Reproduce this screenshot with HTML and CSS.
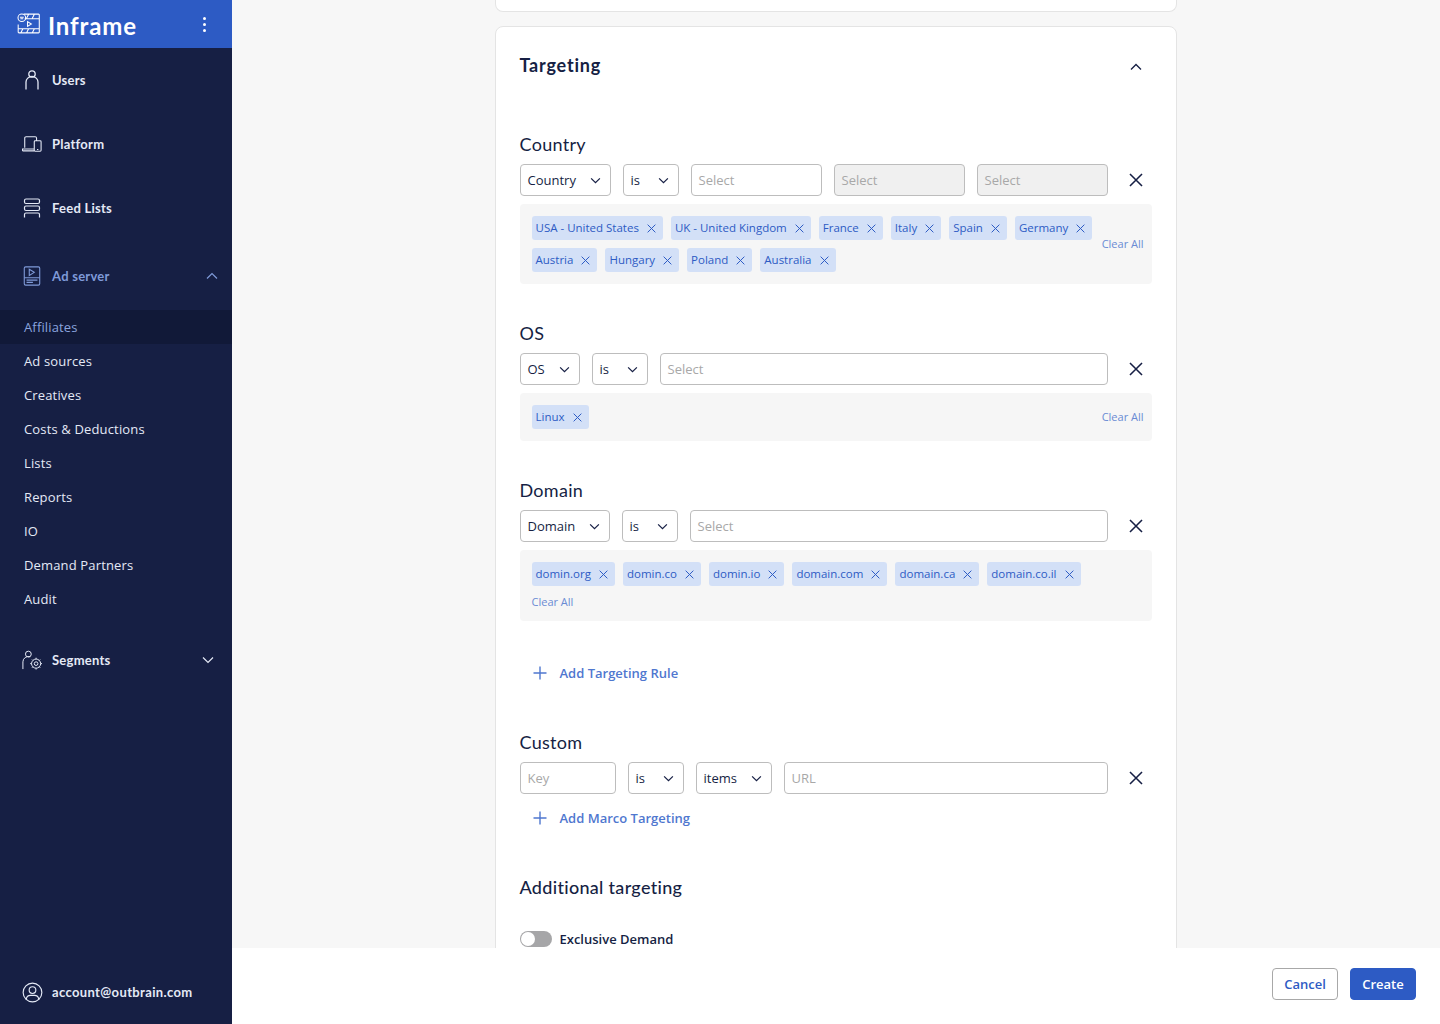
FILE: index.html
```html
<!DOCTYPE html>
<html lang="en">
<head>
<meta charset="utf-8">
<title>Inframe</title>
<link rel="stylesheet" href="styles.css">
</head>
<body>
<svg class="defs" width="0" height="0" aria-hidden="true">
  <symbol id="chev" viewBox="0 0 12 8"><path d="M1 1.500l5 5 5-5" fill="none" stroke="currentColor" stroke-width="1.400"/></symbol>
  <symbol id="x" viewBox="0 0 10 10"><path d="M.7.7l8.600 8.600M9.300.7l-8.600 8.600" fill="none" stroke="currentColor" stroke-width="1.100"/></symbol>
  <symbol id="plus" viewBox="0 0 14 14"><path d="M7 .5v13M.5 7h13" fill="none" stroke="currentColor" stroke-width="1.400"/></symbol>
</svg>
<div class="app">
  <aside class="sidebar">
    <header class="brand">
      <svg class="brand-logo" viewBox="0 0 24 22" fill="none" stroke="#fff" stroke-width="1.100"><path d="M7 1.200h15.500a.8.8 0 0 1 .8.8v18a.8.8 0 0 1-.8.8H2a.8.8 0 0 1-.8-.8v-8M1.200 16.500h22M8 6h15.300M12 1.500l-2 4M18 1.500l-2 4M6 16.800l-2 4M12 16.800l-2 4M18 16.800l-2 4"/><circle cx="5" cy="5" r="4"/><path d="M3 4.500h4M3.500 6h3"/><path d="M11 9v5l4-2.500z"/></svg>
      <span class="brand-name">Inframe</span>
      <span class="kebab"><i></i><i></i><i></i></span>
    </header>
    <nav class="nav">
      <a class="nav-item"><svg class="nav-icon" viewBox="0 0 20 20" fill="none" stroke="currentColor" stroke-width="1.300"><circle cx="10" cy="4" r="3.200"/><path d="M4 19.500v-7.500a6 5.500 0 0 1 12 0v7.500"/></svg><span>Users</span></a>
      <a class="nav-item"><svg class="nav-icon" viewBox="0 0 22 18" fill="none" stroke="currentColor" stroke-width="1.200"><path d="M3 13V2.500A1.500 1.500 0 0 1 4.500 1H14.500a1.500 1.500 0 0 1 1.500 1.500V5M.5 14.500H13.500v1.300a.8.8 0 0 1-.8.8H1.300a.8.8 0 0 1-.8-.8zM14.500 5.500h5.500a1 1 0 0 1 1 1v9.500a1 1 0 0 1-1 1h-5.500a1 1 0 0 1-1-1V6.500a1 1 0 0 1 1-1zM16.500 15h1.500"/></svg><span>Platform</span></a>
      <a class="nav-item"><svg class="nav-icon" viewBox="0 0 20 20" fill="none" stroke="currentColor" stroke-width="1.200"><rect x="2.500" y="1" width="15" height="4.500" rx="1.500"/><rect x="2.500" y="8" width="15" height="4.500" rx="1.500"/><path d="M2.500 19.500v-3a1.500 1.500 0 0 1 1.500-1.500h12a1.500 1.500 0 0 1 1.500 1.500v3"/></svg><span>Feed Lists</span></a>
      <a class="nav-item nav-item-open"><svg class="nav-icon" viewBox="0 0 20 22" fill="none" stroke="currentColor" stroke-width="1.200"><rect x="1.500" y="1" width="17" height="20" rx="1.500"/><path d="M1.500 13h17M7 3.500v7l5.500-3.500zM4 15.500h12M4 18h7"/></svg><span>Ad server</span><svg class="nav-chev nav-chev-up" viewBox="0 0 12 8"><path d="M1 6.500l5-5 5 5" fill="none" stroke="currentColor" stroke-width="1.200"/></svg></a>
      <ul class="subnav">
        <li class="subnav-item subnav-active">Affiliates</li>
        <li class="subnav-item">Ad sources</li>
        <li class="subnav-item">Creatives</li>
        <li class="subnav-item">Costs &amp; Deductions</li>
        <li class="subnav-item">Lists</li>
        <li class="subnav-item">Reports</li>
        <li class="subnav-item">IO</li>
        <li class="subnav-item">Demand Partners</li>
        <li class="subnav-item">Audit</li>
      </ul>
      <a class="nav-item nav-item-segments"><svg class="nav-icon" viewBox="0 0 22 22" fill="none" stroke="currentColor" stroke-width="1.100"><circle cx="7" cy="4.500" r="3.200"/><path d="M1 21v-8a6 6 0 0 1 8-5.500"/><circle cx="15.500" cy="15" r="5"/><circle cx="15.500" cy="15" r="2"/><path d="M15.500 8.500v1.500M15.500 20v1.500M9 15h1.500M20.500 15H22M11 10.500l1 1M19 18.500l1 1M11 19.500l1-1M19 11.500l1-1"/></svg><span>Segments</span><svg class="nav-chev" viewBox="0 0 12 8"><path d="M1 1.500l5 5 5-5" fill="none" stroke="currentColor" stroke-width="1.200"/></svg></a>
    </nav>
    <a class="nav-item account"><svg class="nav-icon account-icon" viewBox="0 0 22 22" fill="none" stroke="currentColor" stroke-width="1.200"><circle cx="11" cy="11" r="9.800"/><circle cx="11" cy="8.500" r="3.500"/><path d="M4.500 18.500v-.5a4.500 4.500 0 0 1 4.500-4h4a4.500 4.500 0 0 1 4.500 4v.5"/></svg><span>account@outbrain.com</span></a>
  </aside>

  <div class="main">
    <main class="content">
      <div class="card card-prev"></div>
      <section class="card card-targeting">
        <div class="card-head">
          <h2 class="card-title">Targeting</h2>
          <svg class="card-chev" viewBox="0 0 12 8"><path d="M1 6.500l5-5 5 5" fill="none" stroke="currentColor" stroke-width="1.300"/></svg>
        </div>

        <div class="rule rule-first">
          <h3 class="rule-title">Country</h3>
          <div class="rule-row">
            <div class="field select w-country">Country<svg class="chev"><use href="#chev"/></svg></div>
            <div class="field select w-is">is<svg class="chev"><use href="#chev"/></svg></div>
            <div class="field grow placeholder">Select</div>
            <div class="field grow placeholder disabled">Select</div>
            <div class="field grow placeholder disabled">Select</div>
            <button class="close"><svg><use href="#x"/></svg></button>
          </div>
          <div class="tagbox">
            <div class="tags">
              <span class="tag">USA - United States<svg><use href="#x"/></svg></span>
              <span class="tag">UK - United Kingdom<svg><use href="#x"/></svg></span>
              <span class="tag">France<svg><use href="#x"/></svg></span>
              <span class="tag">Italy<svg><use href="#x"/></svg></span>
              <span class="tag">Spain<svg><use href="#x"/></svg></span>
              <span class="tag">Germany<svg><use href="#x"/></svg></span>
              <span class="tag">Austria<svg><use href="#x"/></svg></span>
              <span class="tag">Hungary<svg><use href="#x"/></svg></span>
              <span class="tag">Poland<svg><use href="#x"/></svg></span>
              <span class="tag">Australia<svg><use href="#x"/></svg></span>
            </div>
            <a class="clear">Clear All</a>
          </div>
        </div>

        <div class="rule">
          <h3 class="rule-title">OS</h3>
          <div class="rule-row">
            <div class="field select w-os">OS<svg class="chev"><use href="#chev"/></svg></div>
            <div class="field select w-is">is<svg class="chev"><use href="#chev"/></svg></div>
            <div class="field grow placeholder">Select</div>
            <button class="close"><svg><use href="#x"/></svg></button>
          </div>
          <div class="tagbox">
            <div class="tags">
              <span class="tag">Linux<svg><use href="#x"/></svg></span>
            </div>
            <a class="clear">Clear All</a>
          </div>
        </div>

        <div class="rule">
          <h3 class="rule-title">Domain</h3>
          <div class="rule-row">
            <div class="field select w-domain">Domain<svg class="chev"><use href="#chev"/></svg></div>
            <div class="field select w-is-d">is<svg class="chev"><use href="#chev"/></svg></div>
            <div class="field grow placeholder">Select</div>
            <button class="close"><svg><use href="#x"/></svg></button>
          </div>
          <div class="tagbox tagbox-stacked">
            <div class="tags">
              <span class="tag">domin.org<svg><use href="#x"/></svg></span>
              <span class="tag">domin.co<svg><use href="#x"/></svg></span>
              <span class="tag">domin.io<svg><use href="#x"/></svg></span>
              <span class="tag">domain.com<svg><use href="#x"/></svg></span>
              <span class="tag">domain.ca<svg><use href="#x"/></svg></span>
              <span class="tag">domain.co.il<svg><use href="#x"/></svg></span>
            </div>
            <a class="clear">Clear All</a>
          </div>
        </div>

        <a class="add add-rule"><svg><use href="#plus"/></svg>Add Targeting Rule</a>

        <div class="rule rule-custom">
          <h3 class="rule-title">Custom</h3>
          <div class="rule-row">
            <div class="field placeholder w-key">Key</div>
            <div class="field select w-is-c">is<svg class="chev"><use href="#chev"/></svg></div>
            <div class="field select w-items">items<svg class="chev"><use href="#chev"/></svg></div>
            <div class="field grow placeholder">URL</div>
            <button class="close"><svg><use href="#x"/></svg></button>
          </div>
        </div>
        <a class="add add-macro"><svg><use href="#plus"/></svg>Add Marco Targeting</a>

        <h3 class="rule-title additional">Additional targeting</h3>
        <div class="toggle-row">
          <span class="toggle"></span>
          <span class="toggle-label">Exclusive Demand</span>
        </div>
      </section>
    </main>
    <footer class="footer">
      <button class="btn btn-secondary">Cancel</button>
      <button class="btn btn-primary">Create</button>
    </footer>
  </div>
</div>
</body>
</html>
```

FILE: styles.css
```css
* { box-sizing: border-box; }
html, body { margin: 0; height: 100%; }
body { font-family: "Open Sans", "Noto Sans", sans-serif; color: #161f44; background: #f7f7f7; overflow: hidden; }
.defs { position: absolute; }
.app { display: flex; height: 1024px; }

.sidebar { width: 232px; flex: none; background: #161f44; color: #e4e9f6; display: flex; flex-direction: column; }
.brand { height: 48px; flex: none; background: #2d5bc4; display: flex; align-items: center; padding: 0 26px 0 17px; }
.brand-logo { width: 23px; height: 21px; margin-top: -1px; }
.brand-name { font: 700 24px/48px Lato, sans-serif; color: #fff; margin-left: 8px; padding-top: 3px; letter-spacing: .9px; flex: 1; }
.kebab { display: flex; flex-direction: column; gap: 3px; }
.kebab i { width: 3px; height: 3px; border-radius: 50%; background: #fff; display: block; }

.nav { display: flex; flex-direction: column; }
.nav-item { height: 64px; display: flex; align-items: center; padding: 0 16px 0 22px; font: 700 13px/16px Lato, sans-serif; letter-spacing: .25px; }
.nav-icon { width: 20px; height: 20px; margin-right: 10px; flex: none; }
.nav-item span { flex: 1; }
.nav-chev { width: 12px; height: 8px; }
.nav-item-open { margin-top: 4px; color: #7f9ad8; }
.nav-chev-up { margin-right: -2px; }
.nav-item-segments { margin-top: 12px; padding-right: 18px; }
.subnav { list-style: none; margin: 2px 0 0; padding: 0; }
.subnav-item { height: 34px; padding-left: 24px; font-size: 13px; font-weight: 500; letter-spacing: .15px; line-height: 34px; }
.subnav-active { background: #111938; color: #8aa4de; }
.account { margin-top: auto; letter-spacing: .36px; }
.account-icon { width: 21px; height: 21px; margin-right: 9px; }

.main { flex: 1; min-width: 0; display: flex; flex-direction: column; }
.content { flex: 1; min-height: 0; overflow: hidden; display: flex; flex-direction: column; align-items: center; }
.card { width: 682px; flex: none; background: #fff; border: 1px solid #e4e4e4; }
.card-prev { height: 12px; border-top: 0; border-radius: 0 0 8px 8px; margin-bottom: 14px; margin-left: -1px; }
.card-targeting { border-radius: 8px; padding: 26px 24px 40px; margin-left: -1px; }
.card-head { display: flex; align-items: center; justify-content: space-between; height: 24px; padding-right: 10px; }
.card-title { margin: 0; font: 700 18px/24px Lato, sans-serif; letter-spacing: .8px; }
.card-chev { width: 12px; height: 8px; margin-top: 4px; }

.rule { margin-top: 37px; }
.rule-first { margin-top: 55px; }
.rule-custom { margin-top: 41px; }
.rule-title { margin: 0 0 8px; font: 400 18px/24px Lato, sans-serif; letter-spacing: .3px; }
.rule-row { display: flex; gap: 12px; align-items: center; }
.field { height: 32px; border: 1px solid #bdbdbd; border-radius: 4px; background: #fff; padding: 0 7px; font-size: 13px; line-height: 30px; display: flex; align-items: center; }
.select { justify-content: space-between; padding-right: 9px; }
.grow { flex: 1; min-width: 0; }
.placeholder { color: #a8a8a8; }
.disabled { background: #f0f0f0; }
.chev { width: 11px; height: 7px; color: #161f44; }
.w-country { width: 91px; }
.w-is { width: 56px; }
.w-is-d { width: 56px; }
.w-is-c { width: 56px; }
.w-os { width: 60px; }
.w-domain { width: 90px; }
.w-key { width: 96px; }
.w-items { width: 76px; }
.close { width: 32px; height: 32px; padding: 0; border: 0; background: none; color: #161f44; display: flex; align-items: center; justify-content: center; }
.close svg { width: 14px; height: 14px; }

.tagbox { margin-top: 8px; padding: 12px 8px 12px 12px; background: #f6f6f6; border-radius: 4px; display: flex; align-items: center; gap: 8px; }
.tags { flex: 1; display: flex; flex-wrap: wrap; gap: 8px; }
.tag { height: 24px; padding: 0 7px 0 4px; background: #d3e0f7; color: #2d5bc4; border-radius: 3px; font-size: 11.5px; font-weight: 500; line-height: 24px; display: flex; align-items: center; gap: 8px; }
.tag svg { width: 9px; height: 9px; }
.clear { font-size: 11px; line-height: 16px; color: #6a8bd4; flex: none; }
.tagbox-stacked { display: block; padding-bottom: 11px; }
.tagbox-stacked .clear { display: block; margin-top: 8px; }

.add { height: 32px; display: flex; align-items: center; gap: 13px; padding-left: 13px; color: #4f77cf; font-size: 13px; font-weight: 600; }
.add svg { width: 14px; height: 14px; }
.add-rule { margin-top: 36px; }
.add-macro { margin-top: 8px; }

.additional { margin: 41px 0 0; font-weight: 500; }
.toggle-row { margin-top: 32px; display: flex; align-items: center; gap: 8px; height: 16px; }
.toggle { width: 32px; height: 16px; border-radius: 8px; background: #a6a6a8; position: relative; }
.toggle::before { content: ""; position: absolute; left: 1px; top: 1px; width: 14px; height: 14px; border-radius: 50%; background: #fff; }
.toggle-label { font-size: 13px; font-weight: 600; }

.footer { height: 76px; flex: none; background: #fff; display: flex; justify-content: flex-end; align-items: center; gap: 12px; padding: 0 24px 4px; }
.btn { width: 66px; height: 32px; border-radius: 4px; font: 600 13px "Open Sans", sans-serif; padding: 0; }
.btn-secondary { background: #fff; border: 1px solid #a8a8a8; color: #2d5bc4; }
.btn-primary { background: #2d5bc4; border: 1px solid #2d5bc4; color: #fff; }
```
